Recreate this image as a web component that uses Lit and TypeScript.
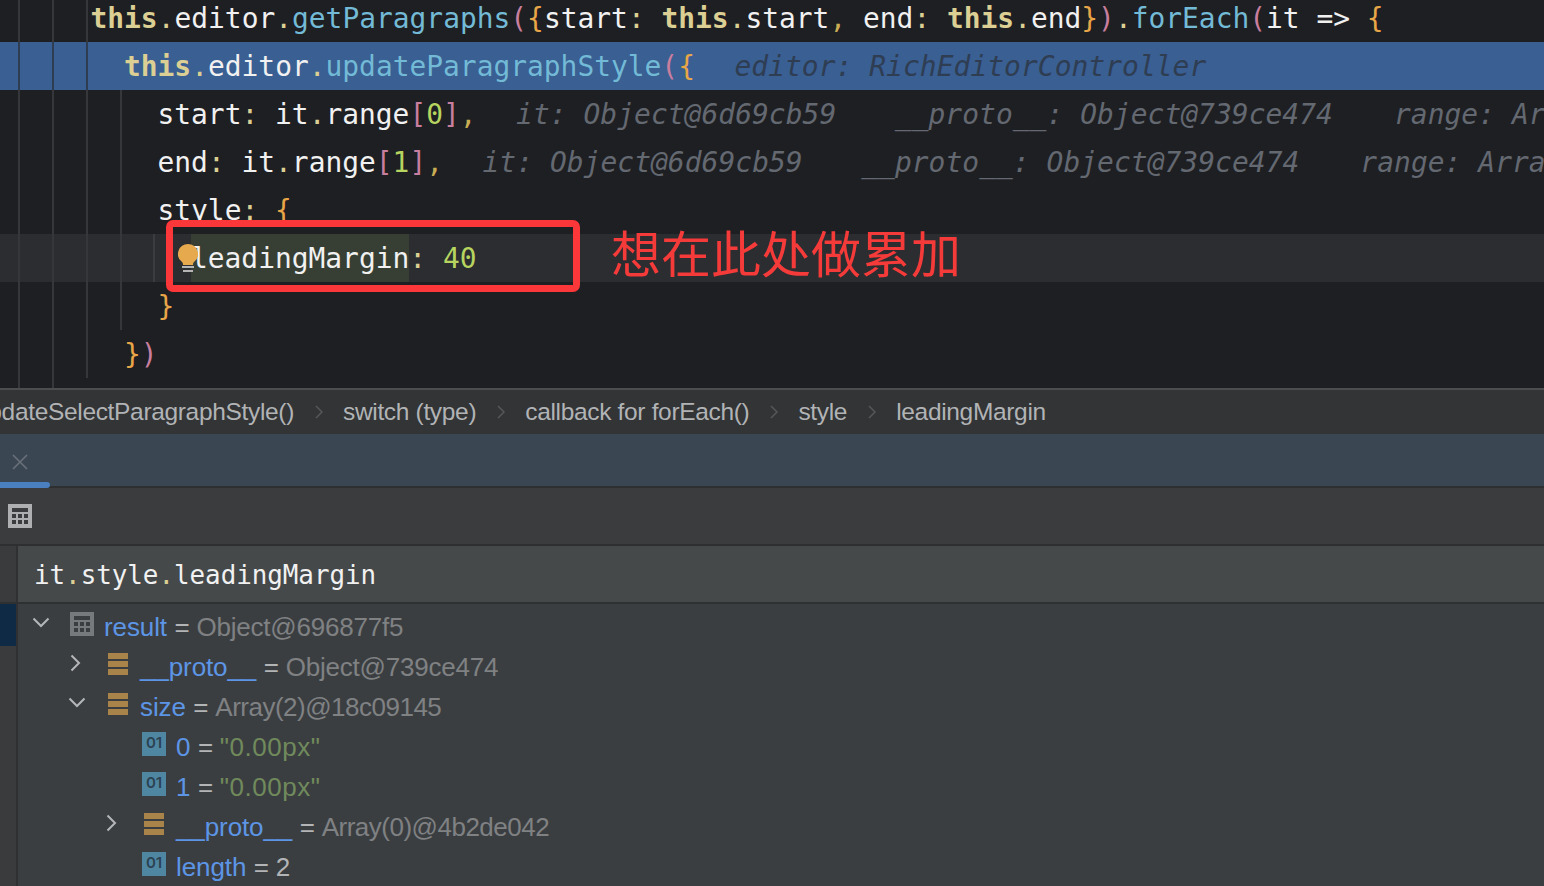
import { LitElement, html, css, svg } from "lit";
import { customElement } from "lit/decorators.js";

const chevDown = html`<svg class="chev" viewBox="0 0 18 12" width="18" height="12"><path d="M1.5 1.5 9 9l7.5-7.5" fill="none" stroke="#b4b6b8" stroke-width="2"/></svg>`;
const chevRight = html`<svg class="chev right" viewBox="0 0 12 18" width="12" height="18"><path d="M1.5 1.5 9 9l-7.5 7.5" fill="none" stroke="#b4b6b8" stroke-width="2"/></svg>`;
const fieldIcon = html`<svg class="ic field" viewBox="0 0 20 22" width="20" height="22"><g fill="#a9844a"><rect width="20" height="6"/><rect y="8" width="20" height="6"/><rect y="16" width="20" height="6"/></g></svg>`;
const tableIcon = (fg: string, bg: string) => html`<svg class="ic" viewBox="0 0 24 24" width="24" height="24"><rect width="24" height="24" fill="${fg}"/>${svg`<g fill="${bg}"><rect x="4" y="4" width="16" height="4"/><rect x="4" y="10" width="4" height="4"/><rect x="10" y="10" width="4" height="4"/><rect x="16" y="10" width="4" height="4"/><rect x="4" y="16" width="4" height="4"/><rect x="10" y="16" width="4" height="4"/><rect x="16" y="16" width="4" height="4"/></g>`}</svg>`;
const primIcon = html`<span class="prim">01</span>`;

interface Row { level: number; chev?: "down" | "right"; icon: "table" | "field" | "prim"; name: string; value: string; cls: string; }
const rows: Row[] = [
  { level: 0, chev: "down", icon: "table", name: "result", value: "Object@696877f5", cls: "val" },
  { level: 1, chev: "right", icon: "field", name: "__proto__", value: "Object@739ce474", cls: "val" },
  { level: 1, chev: "down", icon: "field", name: "size", value: "Array(2)@18c09145", cls: "val arr" },
  { level: 2, icon: "prim", name: "0", value: '"0.00px"', cls: "str" },
  { level: 2, icon: "prim", name: "1", value: '"0.00px"', cls: "str" },
  { level: 2, chev: "right", icon: "field", name: "__proto__", value: "Array(0)@4b2de042", cls: "val arr" },
  { level: 2, icon: "prim", name: "length", value: "2", cls: "num" },
];
const crumbs = ["switch (type)", "callback for forEach()", "style", "leadingMargin"];

@customElement("app-root")
export class AppRoot extends LitElement {
  static styles = css`
    :host { display: block; width: 1544px; height: 886px; overflow: hidden; background: #3b3e41; font-family: "Liberation Sans", Arial, sans-serif; position: relative; }
    .editor { height: 388px; background: #1e1f22; overflow: hidden; position: relative; font-family: "DejaVu Sans Mono", monospace; font-size: 27.9px; color: #f1f1f1; }
    .lines { margin-top: -6px; }
    .line { height: 48px; line-height: 50px; white-space: pre; }
    .i0 { padding-left: 90.5px; } .i1 { padding-left: 124px; } .i2 { padding-left: 157.5px; } .i3 { padding-left: 191px; }
    .sel { background: #395f93; }
    .cur { background: #2b2d30; }
    .k { color: #dccf94; font-weight: 700; }
    .d { color: #dccf94; }
    .m { color: #73bad6; }
    .p { color: #c87e9e; }
    .b { color: #e8a648; }
    .n { color: #b6d45f; }
    .c { color: #c9ad54; }
    .w { background: #373f34; display: inline-block; height: 48px; vertical-align: top; }
    .h { color: #636871; font-style: italic; letter-spacing: .06px; }
    .sel .h { color: #2b2f37; opacity: .7; }
    .gap39 { margin-left: 39.5px; } .gap60 { margin-left: 58.5px; } .gap62 { margin-left: 61px; }
    .guide { position: absolute; width: 2px; background: #36373b; top: 0; }
    .g1 { left: 18px; height: 388px; } .g2 { left: 52px; height: 388px; } .g3 { left: 86px; height: 378px; }
    .g4 { left: 120px; top: 90px; height: 240px; } .g5 { left: 153px; top: 234px; height: 48px; background: #3a3c40; }
    .gs1, .gs2, .gs3 { top: 42px; height: 48px; background: #2f3d52; }
    .gs1 { left: 18px; } .gs2 { left: 52px; } .gs3 { left: 86px; }
    .redbox { position: absolute; left: 166px; top: 220px; width: 414px; height: 72px; box-sizing: border-box; border: 7px solid #fb3739; border-radius: 7px; }
    .note { position: absolute; left: 611px; top: 218px; font: 400 50px/66px "Noto Sans CJK SC", sans-serif; color: #f53a3a; white-space: nowrap; }
    .bulb { position: absolute; left: 178px; top: 244px; }
    .crumbs { box-sizing: border-box; height: 46px; background: #323436; border-top: 2px solid #4b4d4f; display: flex; align-items: center; color: #b1b3b5; font-size: 24.5px; letter-spacing: -0.33px; white-space: nowrap; }
    .first { width: 294px; display: flex; justify-content: flex-end; overflow: hidden; flex: none; }
    .sep { width: 49px; flex: none; display: flex; justify-content: center; }
    .tabs { box-sizing: border-box; height: 54px; background: #3b4653; border-bottom: 2px solid #2d2f31; position: relative; display: flex; align-items: center; padding: 0 0 0 12px; }
    .tabs svg { margin-top: 3px; }
    .underline { position: absolute; left: 0; bottom: -2px; width: 50px; height: 6px; background: #4a80c0; border-radius: 0 3px 3px 0; }
    .toolbar { box-sizing: border-box; height: 58px; background: #3a3c3e; border-bottom: 2px solid #2d2f31; display: flex; align-items: center; padding-left: 8px; }
    .expr { display: flex; height: 58px; box-sizing: border-box; border-bottom: 2px solid #2e3032; }
    .strip { width: 16px; background: #393b3d; flex: none; }
    .input { flex: 1; background: #45494a; border-left: 2px solid #2e3032; font-family: "DejaVu Sans Mono", monospace; color: #f1f1f1; line-height: 58px; height: 56px; padding-left: 16px; font-size: 25.9px; letter-spacing: -.04px; white-space: pre; }
    .body { display: flex; height: 284px; }
    .gutter { width: 16px; flex: none; background: #393b3d; }
    .mark { height: 42px; background: #0e2a45; }
    .tree { flex: 1; border-left: 2px solid #2e3032; padding-top: 3px; }
    .row { height: 40px; display: flex; align-items: center; font-size: 26px; letter-spacing: -0.22px; white-space: nowrap; color: #b2b4b6; margin-left: -18px; }
    .l0 { padding-left: 32px; } .l1 { padding-left: 68px; } .l2 { padding-left: 104px; }
    .cbox { width: 38px; flex: none; display: flex; align-items: center; height: 40px; }
    .cbox .chev { margin-top: -8px; }
    .cbox .right { margin-left: 2px; }
    .ibox { width: 34px; flex: none; display: flex; align-items: center; height: 40px; }
    .ibox > * { margin-top: -7px; }
    .ibox > .field { margin-left: 2px; }
    .name { color: #5d95e6; letter-spacing: -0.1px; }
    .eq { margin: 0 7px 0 7.5px; }
    .val { color: #7f8183; }
    .arr { letter-spacing: -0.5px; }
    .str { color: #708a5c; letter-spacing: 0.5px; }
    .num { color: #b2b4b6; }
    .prim { width: 24px; height: 24px; background: #4f87a3; color: #2b4352; font: 600 15px/22px Inter, "Liberation Sans", sans-serif; letter-spacing: 0; text-align: center; display: block; }
  `;

  private iconFor(r: Row) {
    if (r.icon === "table") return tableIcon("#777a7d", "#3b3e41");
    if (r.icon === "field") return fieldIcon;
    return primIcon;
  }

  render() {
    return html`
      <div class="editor">
        <div class="lines">
          <div class="line i0"><span class="k">this</span><span class="d">.</span>editor<span class="d">.</span><span class="m">getParagraphs</span><span class="p">(</span><span class="b">{</span>start<span class="d">:</span> <span class="k">this</span><span class="d">.</span>start<span class="c">,</span> end<span class="d">:</span> <span class="k">this</span><span class="d">.</span>end<span class="b">}</span><span class="p">)</span><span class="d">.</span><span class="m">forEach</span><span class="p">(</span>it =&gt; <span class="b">{</span></div>
          <div class="line i1 sel"><span class="k">this</span><span class="d">.</span>editor<span class="d">.</span><span class="m">updateParagraphStyle</span><span class="p">(</span><span class="b">{</span><span class="h gap39">editor: RichEditorController</span></div>
          <div class="line i2">start<span class="d">:</span> it<span class="d">.</span>range<span class="p">[</span><span class="n">0</span><span class="p">]</span><span class="c">,</span><span class="h gap39">it: Object@6d69cb59</span><span class="h gap60">__proto__: Object@739ce474</span><span class="h gap62">range: Array</span></div>
          <div class="line i2">end<span class="d">:</span> it<span class="d">.</span>range<span class="p">[</span><span class="n">1</span><span class="p">]</span><span class="c">,</span><span class="h gap39">it: Object@6d69cb59</span><span class="h gap60">__proto__: Object@739ce474</span><span class="h gap62">range: Array</span></div>
          <div class="line i2">style<span class="d">:</span> <span class="b">{</span></div>
          <div class="line i3 cur"><span class="w">leadingMargin</span><span class="d">:</span> <span class="n">40</span></div>
          <div class="line i2"><span class="b">}</span></div>
          <div class="line i1"><span class="b">}</span><span class="p">)</span></div>
        </div>
        <i class="guide g1"></i><i class="guide g2"></i><i class="guide g3"></i><i class="guide g4"></i><i class="guide g5"></i>
        <i class="guide gs1"></i><i class="guide gs2"></i><i class="guide gs3"></i>
        <svg class="bulb" viewBox="0 0 20 29" width="20" height="29"><path d="M10 0a10 10 0 0 1 6.5 17.6c-1.2 1-1.5 2-1.5 3.4H5c0-1.4-.3-2.4-1.5-3.4A10 10 0 0 1 10 0Z" fill="#e6a94e"/><rect x="4" y="22" width="12" height="2" fill="#b5b5b5"/><rect x="5" y="26" width="10" height="2" fill="#b5b5b5"/></svg>
        <div class="redbox"></div>
        <div class="note">想在此处做累加</div>
      </div>
      <div class="crumbs">
        <div class="first"><span>updateSelectParagraphStyle()</span></div>
        ${crumbs.map((c) => html`<span class="sep"><svg viewBox="0 0 8 14" width="8" height="14"><path d="M1 1l6 6-6 6" fill="none" stroke="#55585a" stroke-width="1.5"/></svg></span><span>${c}</span>`)}
      </div>
      <div class="tabs">
        <svg viewBox="0 0 16 16" width="16" height="16"><path d="M1 1l14 14M15 1 1 15" stroke="#68707a" stroke-width="1.6" fill="none"/></svg>
        <div class="underline"></div>
      </div>
      <div class="toolbar">${tableIcon("#adafb1", "#3a3c3e")}</div>
      <div class="expr"><div class="strip"></div><div class="input">it<span class="d">.</span>style<span class="d">.</span>leadingMargin</div></div>
      <div class="body">
        <div class="gutter"><div class="mark"></div></div>
        <div class="tree">
          ${rows.map((r) => html`<div class="row l${r.level}">
            <span class="cbox">${r.chev === "down" ? chevDown : r.chev === "right" ? chevRight : ""}</span>
            <span class="ibox">${this.iconFor(r)}</span>
            <span class="name">${r.name}</span><span class="eq">=</span><span class="${r.cls}">${r.value}</span>
          </div>`)}
        </div>
      </div>
    `;
  }
}
